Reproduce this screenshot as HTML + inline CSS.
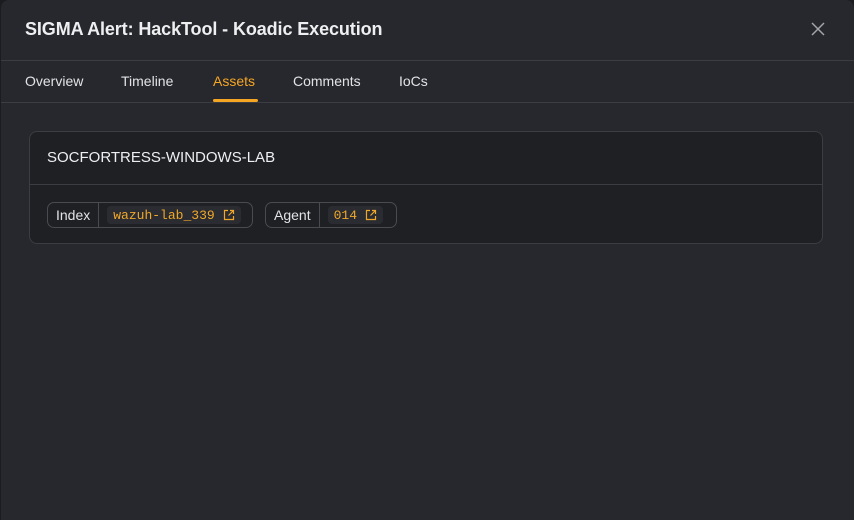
<!DOCTYPE html>
<html><head><style>
*{box-sizing:border-box;margin:0;padding:0}
body{width:854px;height:520px;background:#1b1c20;font-family:"Liberation Sans",sans-serif;overflow:hidden;position:relative}
.modal{position:absolute;left:1px;top:0;width:853px;height:520px;background:#27282d;border-radius:8px 8px 0 0}
.title{position:absolute;left:24px;top:19px;font-size:18px;font-weight:bold;color:#eeeff1;letter-spacing:-0.1px}
.close{position:absolute;left:809px;top:21px}
.hr1{position:absolute;left:0;right:0;top:60px;height:1px;background:#3c3d42}
.tabs{position:absolute;left:0;right:0;top:61px;height:42px;border-bottom:1px solid #3c3d42}
.tab{position:absolute;top:12px;font-size:14px;color:#e2e3e6}
.tab.a{color:#f5a623}
.ul{position:absolute;left:212px;top:38px;width:45px;height:3px;background:#f5a623;border-radius:2px}
.card{position:absolute;left:28px;top:131px;width:794px;height:113px;background:#1f2024;border:1px solid #3c3d42;border-radius:8px}
.ch{position:absolute;left:17px;top:17px;font-size:15px;color:#eeeff1}
.cd{position:absolute;left:0;right:0;top:52px;height:1px;background:#3c3d42}
.chip{position:absolute;top:70px;height:26px;border:1px solid #4a4b50;border-radius:7px;display:flex;align-items:center;font-size:14px;color:#e2e3e6}
.chip .l{padding:0 8px;height:100%;display:flex;align-items:center;border-right:1px solid #4a4b50}
.chip .v{margin:0 8px;height:18px;background:#2b2c31;border-radius:4px;padding:0 6px;display:flex;align-items:center;font-family:"Liberation Mono",monospace;font-size:13px;color:#f0a82a;gap:8px}
</style></head><body>
<div class="modal">
<div class="title">SIGMA Alert: HackTool - Koadic Execution</div>
<svg class="close" width="16" height="16" viewBox="0 0 16 16"><path d="M2 2L14 14M14 2L2 14" stroke="#a4a5aa" stroke-width="1.5"/></svg>
<div class="hr1"></div>
<div class="tabs">
<div class="tab" style="left:24px">Overview</div>
<div class="tab" style="left:120px">Timeline</div>
<div class="tab a" style="left:212px">Assets</div>
<div class="tab" style="left:292px">Comments</div>
<div class="tab" style="left:398px">IoCs</div>
<div class="ul"></div>
</div>
<div class="card">
<div class="ch">SOCFORTRESS-WINDOWS-LAB</div>
<div class="cd"></div>
<div class="chip" style="left:17px;width:206px"><span class="l">Index</span><span class="v">wazuh-lab_339 <svg width="12" height="12" viewBox="0 0 12 12" fill="none" stroke="#f0a82a" stroke-width="1.2"><path d="M5 1.5H1.5V10.5H10.5V7M7 1.5H10.5V5M10.5 1.5L5.5 6.5"/></svg></span></div>
<div class="chip" style="left:235px;width:132px"><span class="l">Agent</span><span class="v">014 <svg width="12" height="12" viewBox="0 0 12 12" fill="none" stroke="#f0a82a" stroke-width="1.2"><path d="M5 1.5H1.5V10.5H10.5V7M7 1.5H10.5V5M10.5 1.5L5.5 6.5"/></svg></span></div>
</div>
</div>
</body></html>
